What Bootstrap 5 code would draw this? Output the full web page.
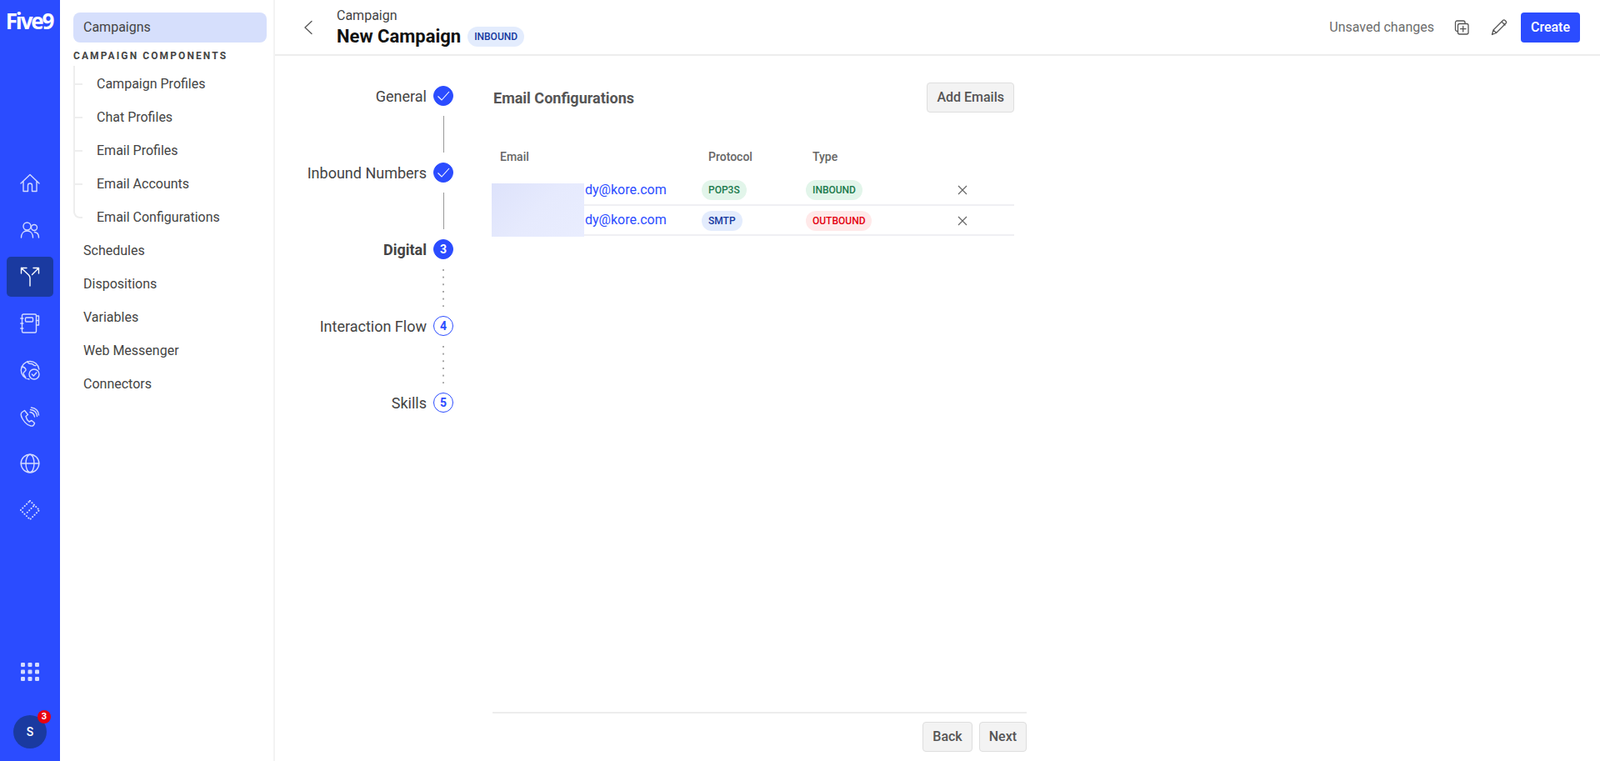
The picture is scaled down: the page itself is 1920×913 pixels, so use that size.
<!DOCTYPE html>
<html lang="en">
<head>
    <meta charset="UTF-8">
    <title>New Campaign</title>
    <link href="https://cdn.jsdelivr.net/npm/bootstrap@5.3.3/dist/css/bootstrap.min.css" rel="stylesheet">
    <style>
        html, body { height: 100%; }
        body { font-family: Roboto, "Liberation Sans", sans-serif; font-size: 16px; color: #444; overflow: hidden; }
        .app-shell { height: 913px; }
        .rail { width: 72px; background: #2b4cff; color: #fff; flex: none; padding-top: 10px; padding-bottom: 15px; }
        .rail-logo { font-family: "Open Sans", Roboto, sans-serif; font-weight: 700; font-size: 26px; line-height: 30px; letter-spacing: -2.1px; text-align: center; height: 186px; margin-left: -2px; }
        .rail-item { width: 56px; height: 48px; border-radius: 5px; margin-bottom: 8px; }
        .rail-item svg, .rail-grid svg { fill: none; stroke: #d3dbff; stroke-width: 1.4; stroke-linecap: round; stroke-linejoin: round; }
        .rail-item.is-active { background: #1a3aa0; }
        .rail-grid { margin-bottom: 40px; }
        .rail-avatar { width: 40px; height: 40px; background: #1a3aa0; font-size: 14px; font-weight: 500; }
        .rail-count { top: -6px; right: -5px; width: 16px; height: 16px; background: #e8000f; font-size: 11px; font-weight: 700; line-height: 16px; text-align: center; }
        .subnav { width: 258px; flex: none; padding: 15px 8px 0 16px; border-right: 2px solid #f3f3f3; }
        .subnav-link { height: 40px; padding-left: 12px; color: #444; text-decoration: none; line-height: 40px; font-size: 16px; }
        .subnav-link.is-current { height: 36px; line-height: 36px; background: #d6dffc; border-radius: 8px; }
        .subnav-head { font-size: 12px; font-weight: 700; letter-spacing: 2.1px; color: #444; line-height: 14px; margin: 9px 0 0; padding-bottom: 7px; }
        .subnav-tree .subnav-link { padding-left: 28px; display: block; position: relative; }
        .subnav-tree .subnav-link::before { content: ""; position: absolute; left: 0; top: -20px; bottom: 19px; width: 11px; border-left: 2px solid #eee; border-bottom: 2px solid #eee; }
        .subnav-tree .subnav-link:first-child::before { top: -2px; }
        .subnav-tree .subnav-link:last-child::before { border-bottom-left-radius: 8px; }
        .topbar { height: 67px; flex: none; border-bottom: 2px solid #ededed; padding-right: 24px; }
        .back-btn { width: 74px; padding-left: 34px; }
        .title-small { font-size: 16px; line-height: 20px; margin-top: 9px; }
        .title-main { font-size: 22px; font-weight: 700; color: #111; line-height: 28px; margin: 1px 0 0; }
        .tag { font-size: 12px; font-weight: 500; line-height: 24px; height: 24px; padding: 0 8px; border-radius: 12px; display: inline-block; }
        .tag-blue { background: #e3ecfd; color: #13389f; }
        .tag-green { background: #e2f5ea; color: #1a7a4c; }
        .tag-red { background: #ffe9e9; color: #e3000f; }
        .unsaved { color: #6d6d6d; font-size: 16px; margin-right: 24px; }
        .tool-icon { fill: none; stroke: #555; stroke-width: 1.3; stroke-linejoin: round; stroke-linecap: round; }
        .copy-icon { margin-right: 26px; }
        .btn-create { background: #2b4cff; color: #fff; font-weight: 500; font-size: 16px; height: 36px; padding: 0 12px; border: 0; border-radius: 4px; }
        .btn-soft { background: #f3f3f3; border: 1px solid #dedede; color: #555; font-weight: 500; font-size: 16px; height: 36px; padding: 0 11px; border-radius: 4px; }
        .stepper { width: 214px; flex: none; padding-top: 36px; }
        .step-row { height: 24px; gap: 8px; font-size: 18px; }
        .step-dot { width: 24px; height: 24px; border-radius: 50%; flex: none; font-size: 14px; font-weight: 700; border: 1px solid #2b4cff; color: #2b4cff; }
        .step-dot.is-filled { background: #2b4cff; color: #fff; }
        .step-line { height: 44px; margin: 12px 11.5px 12px 0; width: 1px; background: #999; align-self: flex-end; }
        .step-line.is-dotted { background: linear-gradient(#a5a5a5 2px, transparent 2px) 0 0 / 2px 8.67px; width: 2px; margin-right: 11px; height: 45px; margin-bottom: 11px; }
        .workarea { width: 641px; flex: none; margin-left: 47px; padding-top: 32px; }
        .work-head { width: 626px; height: 36px; }
        .work-title { font-size: 18px; font-weight: 700; color: #555; margin: 0; padding: 2px 0 0 1px; }
        .mail-table { width: 627px; margin: 32px 0 0 -1px; table-layout: fixed; }
        .mail-table th { font-size: 14px; font-weight: 500; color: #666; padding: 0 0 0 8px; height: 43px; border: 0; vertical-align: middle; }
        .mail-table th:first-child { padding-left: 10px; }
        .mail-table td { height: 36px; padding: 0; vertical-align: middle; border-bottom: 2px solid #efeff3; }
        .mail-table td:last-child { padding-left: 2px; }
        .mail-link { color: #2b4cff; text-decoration: none; font-size: 16px; padding-left: 112px; }
        .blur-cover { left: -1px; top: 85px; width: 111px; height: 64px; background: linear-gradient(135deg, #dde2fb, #e6eafd 50%, #e9edfe); }
        .remove-x { stroke: #666; stroke-width: 1.2; fill: none; }
        .foot-bar { border-top: 2px solid #ededed; height: 59px; padding-top: 10px; gap: 8px; margin-top: auto; width: 641px; }
    </style>
</head>
<body>
<div class="app-shell d-flex">
    <!-- icon rail -->
    <aside class="rail d-flex flex-column align-items-center">
        <div class="rail-logo">Five9</div>
        <div class="rail-item d-flex align-items-center justify-content-center">
            <svg width="24" height="24" viewBox="0 0 24 24"><path d="M1 12 12 1.500 23 12M4 9.500V21.500h5.500v-7a2.500 2.500 0 0 1 5 0v7H20V9.500"/></svg>
        </div>
        <div class="rail-item d-flex align-items-center justify-content-center">
            <svg width="24" height="24" viewBox="0 0 24 24"><circle cx="8.500" cy="7.500" r="4.500"/><path d="M1.500 21c0-5 3-8 7-8s7 3 7 8"/><circle cx="17" cy="9" r="3.500"/><path d="M17.500 14.500c3 .3 5 2.800 5 6.500"/></svg>
        </div>
        <div class="rail-item is-active d-flex align-items-center justify-content-center">
            <svg width="24" height="24" viewBox="0 0 24 24"><path d="M12 23V13.500Q12 11.500 10.500 10L1.500 1.500M1.500 8V1.500H8M22.500 1.500 14.500 9.500M16 1.500h6.500V8" stroke="#fff"/></svg>
        </div>
        <div class="rail-item d-flex align-items-center justify-content-center">
            <svg width="24" height="24" viewBox="0 0 24 24"><rect x="2.500" y="1" width="17" height="22" rx="1.500"/><rect x="6.500" y="5" width="9" height="5" rx="1"/><path d="M.8 6h3M.8 12h3M.8 18h3M19.500 3H22.500V14H19.500M19.500 8.500H22.500"/></svg>
        </div>
        <div class="rail-item d-flex align-items-center justify-content-center">
            <svg width="24" height="24" viewBox="0 0 24 24"><path d="M11 23a10.800 10.800 0 1 1 11.800-12M2 8c3 0 4 1 5 3s-3 3-3 5 3 4 3 6M9 1.500c0 3 3 3 5 3s2 3 5 2"/><circle cx="17" cy="17" r="6"/><path d="m14.300 17 2 2 3.500-4"/></svg>
        </div>
        <div class="rail-item d-flex align-items-center justify-content-center">
            <svg width="24" height="24" viewBox="0 0 24 24"><path d="M5.500 4.500 2.500 6.500C.5 8 1 11 3 14.500s5.500 7.500 10 8.500c2.500.5 4-1 4.500-3.500l-3.500-3-3 1.500C9 16.500 7.500 14 7 11.500l2.500-2Z"/><path d="M12 6.500c3 .3 5 2.500 5.500 5.500M12.500 3.500c4.500.3 7.500 3.500 8 8M13.500 1c4.500.5 8.500 3.500 9 9"/></svg>
        </div>
        <div class="rail-item d-flex align-items-center justify-content-center">
            <svg width="24" height="24" viewBox="0 0 24 24"><circle cx="12" cy="12" r="10.800"/><ellipse cx="12" cy="12" rx="5" ry="10.800"/><path d="M1.200 12h21.600"/></svg>
        </div>
        <div class="rail-item d-flex align-items-center justify-content-center">
            <svg width="24" height="24" viewBox="0 0 24 24" stroke-dasharray="0.100 3.300" style="stroke-width:2"><path d="M12 .8 23.200 12 12 23.200.8 12Z"/><path d="M16 7.500 7.500 16"/></svg>
        </div>
        <div class="rail-grid mt-auto">
            <svg width="24" height="24" viewBox="0 0 24 24" style="fill:#d3dbff;stroke:none"><rect x="1" y="1" width="5" height="5" rx="1.200"/><rect x="9.500" y="1" width="5" height="5" rx="1.200"/><rect x="18" y="1" width="5" height="5" rx="1.200"/><rect x="1" y="9.500" width="5" height="5" rx="1.200"/><rect x="9.500" y="9.500" width="5" height="5" rx="1.200"/><rect x="18" y="9.500" width="5" height="5" rx="1.200"/><rect x="1" y="18" width="5" height="5" rx="1.200"/><rect x="9.500" y="18" width="5" height="5" rx="1.200"/><rect x="18" y="18" width="5" height="5" rx="1.200"/></svg>
        </div>
        <div class="rail-avatar rounded-circle d-flex align-items-center justify-content-center position-relative">S
            <span class="rail-count rounded-circle position-absolute">3</span>
        </div>
    </aside>

    <!-- campaign navigation -->
    <nav class="subnav">
        <a class="subnav-link is-current d-block" href="#">Campaigns</a>
        <div class="subnav-head">CAMPAIGN COMPONENTS</div>
        <div class="subnav-tree">
            <a class="subnav-link" href="#">Campaign Profiles</a>
            <a class="subnav-link" href="#">Chat Profiles</a>
            <a class="subnav-link" href="#">Email Profiles</a>
            <a class="subnav-link" href="#">Email Accounts</a>
            <a class="subnav-link" href="#">Email Configurations</a>
        </div>
        <a class="subnav-link d-block" href="#">Schedules</a>
        <a class="subnav-link d-block" href="#">Dispositions</a>
        <a class="subnav-link d-block" href="#">Variables</a>
        <a class="subnav-link d-block" href="#">Web Messenger</a>
        <a class="subnav-link d-block" href="#">Connectors</a>
    </nav>

    <main class="flex-grow-1 d-flex flex-column">
        <header class="topbar d-flex align-items-center">
            <div class="back-btn">
                <svg width="12" height="18" viewBox="0 0 12 18" class="tool-icon d-block"><path d="M10 1.500 2 9l8 7.500"/></svg>
            </div>
            <div class="align-self-start">
                <div class="title-small">Campaign</div>
                <div class="d-flex align-items-center gap-2">
                    <h1 class="title-main">New Campaign</h1>
                    <span class="tag tag-blue">INBOUND</span>
                </div>
            </div>
            <div class="ms-auto d-flex align-items-center">
                <span class="unsaved">Unsaved changes</span>
                <svg width="18" height="18" viewBox="0 0 18 18" class="tool-icon copy-icon"><path d="M4.500 13.500h-1A2 2 0 0 1 1.500 11.500V3a2 2 0 0 1 2-2H11a2 2 0 0 1 2 2v1"/><rect x="4.500" y="4.500" width="12.500" height="12.500" rx="2"/><path d="M10.700 7.500v6.500M7.500 10.700H14"/></svg>
                <svg width="20" height="20" viewBox="0 0 20 20" class="tool-icon me-3"><path d="M1.500 18.500 3 13 14.500 1.500a1.800 1.800 0 0 1 2.500 0l1 1a1.800 1.800 0 0 1 0 2.500L6.500 16.500Z M3 13l3.500 3.500M13 3l4 4"/></svg>
                <button class="btn-create" type="button">Create</button>
            </div>
        </header>
        <div class="flex-grow-1 d-flex">
            <div class="stepper d-flex flex-column">
                <div class="step-row d-flex align-items-center justify-content-end"><span>General</span><span class="step-dot is-filled d-flex align-items-center justify-content-center"><svg width="16" height="16" viewBox="0 0 16 16" fill="none" stroke="#fff" stroke-width="1.100"><path d="m1.500 8.500 4.500 4.500 9-10"/></svg></span></div>
                <div class="step-line"></div>
                <div class="step-row d-flex align-items-center justify-content-end"><span>Inbound Numbers</span><span class="step-dot is-filled d-flex align-items-center justify-content-center"><svg width="16" height="16" viewBox="0 0 16 16" fill="none" stroke="#fff" stroke-width="1.100"><path d="m1.500 8.500 4.500 4.500 9-10"/></svg></span></div>
                <div class="step-line"></div>
                <div class="step-row d-flex align-items-center justify-content-end"><strong>Digital</strong><span class="step-dot is-filled d-flex align-items-center justify-content-center">3</span></div>
                <div class="step-line is-dotted"></div>
                <div class="step-row d-flex align-items-center justify-content-end"><span>Interaction Flow</span><span class="step-dot d-flex align-items-center justify-content-center">4</span></div>
                <div class="step-line is-dotted"></div>
                <div class="step-row d-flex align-items-center justify-content-end"><span>Skills</span><span class="step-dot d-flex align-items-center justify-content-center">5</span></div>
            </div>
            <section class="workarea d-flex flex-column">
                <div class="work-head d-flex align-items-center justify-content-between">
                    <h2 class="work-title">Email Configurations</h2>
                    <button class="btn-soft" type="button">Add Emails</button>
                </div>
                <div class="position-relative">
                    <table class="table table-borderless mail-table mb-0">
                        <thead><tr><th style="width:252px">Email</th><th style="width:125px">Protocol</th><th style="width:180px">Type</th><th></th></tr></thead>
                        <tbody>
                            <tr>
                                <td><a class="mail-link" href="#">dy@kore.com</a></td>
                                <td><span class="tag tag-green">POP3S</span></td>
                                <td><span class="tag tag-green">INBOUND</span></td>
                                <td><svg width="12" height="12" viewBox="0 0 12 12" class="remove-x"><path d="m1 1 10 10M11 1 1 11"/></svg></td>
                            </tr>
                            <tr>
                                <td><a class="mail-link" href="#">dy@kore.com</a></td>
                                <td><span class="tag tag-blue">SMTP</span></td>
                                <td><span class="tag tag-red">OUTBOUND</span></td>
                                <td><svg width="12" height="12" viewBox="0 0 12 12" class="remove-x"><path d="m1 1 10 10M11 1 1 11"/></svg></td>
                            </tr>
                        </tbody>
                    </table>
                    <div class="blur-cover position-absolute"></div>
                </div>
                <div class="foot-bar d-flex justify-content-end">
                    <button class="btn-soft" type="button">Back</button>
                    <button class="btn-soft" type="button">Next</button>
                </div>
            </section>
        </div>
    </main>
</div>
<script src="https://cdn.jsdelivr.net/npm/bootstrap@5.3.3/dist/js/bootstrap.bundle.min.js"></script>
</body>
</html>
